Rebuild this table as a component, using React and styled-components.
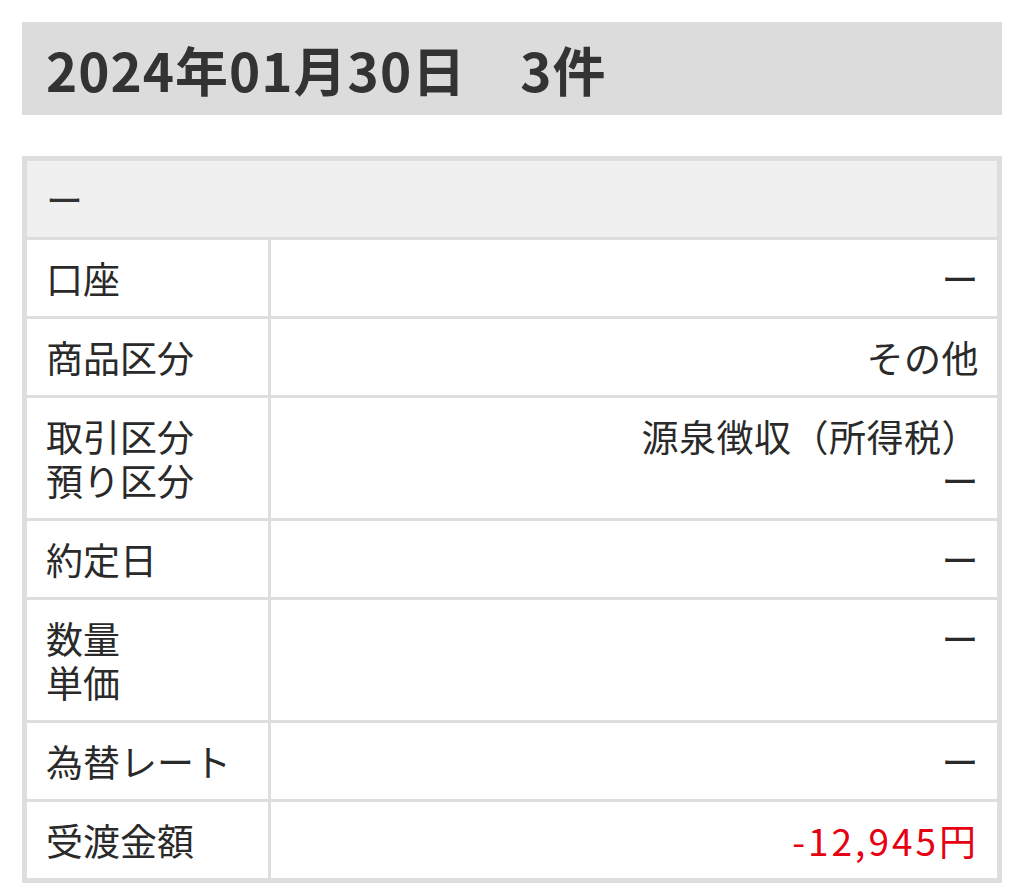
import styled, { createGlobalStyle } from "styled-components";

const GlobalStyle = createGlobalStyle`
  body {
    margin: 0;
    background: #fff;
    font-family: "Noto Sans CJK JP", "Noto Sans", sans-serif;
    color: #333;
  }
`;

const Page = styled.div`
  padding: 22px 22px 10px;
  display: flex;
  flex-direction: column;
  gap: 41px;
`;

const DateHeader = styled.h2`
  margin: 0;
  height: 93px;
  display: flex;
  align-items: center;
  padding: 0 24px;
  background: #dcdcdc;
  font-size: 53px;
  font-weight: 700;
  color: #333;
  letter-spacing: 1px;
`;

const Table = styled.div`
  border: 5px solid #dedede;
  display: flex;
  flex-direction: column;
  gap: 3px;
  background: #dedede;
`;

const TitleRow = styled.div`
  background: #f0f0f0;
  padding: 16px 19px;
  line-height: 44px;
  font-size: 37px;
  color: #333;
`;

const Row = styled.div`
  display: grid;
  grid-template-columns: 241px 1fr;
  gap: 3px;
`;

const Label = styled.div`
  background: #fff;
  padding: 16px 19px;
  font-size: 37px;
  line-height: 44px;
  color: #2a2a2a;
`;

const Value = styled.div`
  background: #fff;
  padding: 16px 18px;
  font-size: 37px;
  line-height: 44px;
  text-align: right;
  color: ${(p) => (p.$negative ? "#e60012" : "#2a2a2a")};
  letter-spacing: ${(p) => (p.$negative ? "3px" : "0.5px")};
`;

const rows = [
  { label: ["口座"], value: ["ー"] },
  { label: ["商品区分"], value: ["その他"] },
  { label: ["取引区分", "預り区分"], value: ["源泉徴収（所得税）", "ー"] },
  { label: ["約定日"], value: ["ー"] },
  { label: ["数量", "単価"], value: ["ー"] },
  { label: ["為替レート"], value: ["ー"] },
  { label: ["受渡金額"], value: ["-12,945円"], negative: true },
];

const Lines = ({ items }) =>
  items.map((t, i) => <div key={i}>{t}</div>);

export default function App() {
  return (
    <>
      <GlobalStyle />
      <Page>
        <DateHeader>2024年01月30日　3件</DateHeader>
        <Table>
          <TitleRow>ー</TitleRow>
          {rows.map((r, i) => (
            <Row key={i}>
              <Label>
                <Lines items={r.label} />
              </Label>
              <Value $negative={r.negative}>
                <Lines items={r.value} />
              </Value>
            </Row>
          ))}
        </Table>
      </Page>
    </>
  );
}
